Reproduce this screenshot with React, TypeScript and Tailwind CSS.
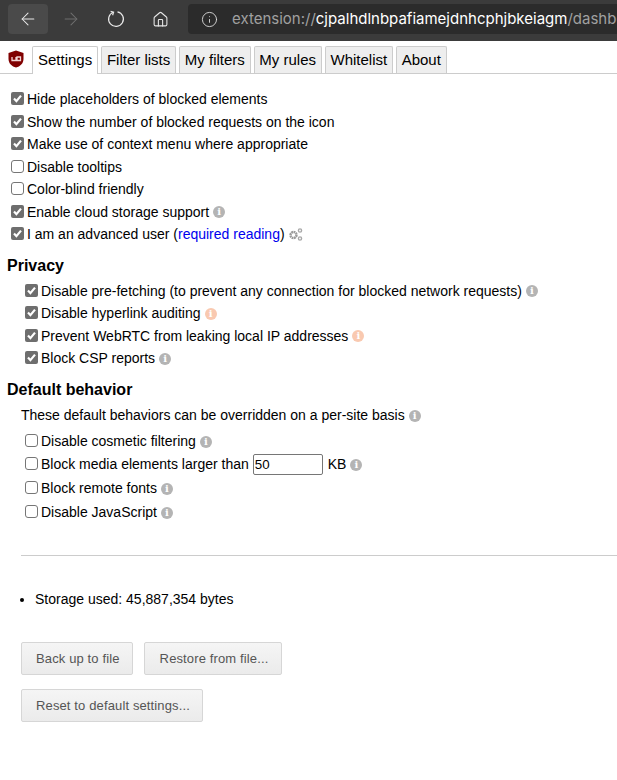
import { ArrowLeft, ArrowRight, Home, Info } from 'lucide-react';

const tabs = ['Filter lists', 'My filters', 'My rules', 'Whitelist', 'About'];

function Check({ checked = false }: { checked?: boolean }) {
  if (!checked) {
    return (
      <span className="h-[13px] w-[13px] shrink-0 -translate-y-px rounded-[3px] border border-[#767676] bg-white" />
    );
  }
  return (
    <span className="flex h-[13px] w-[13px] shrink-0 -translate-y-px items-center justify-center rounded-[2px] bg-[#6e6e6e]">
      <svg fill="none" height="11" viewBox="0 0 11 11" width="11">
        <path d="M2 5.6 4.4 8.2 9 2.6" stroke="white" strokeWidth="2.2" />
      </svg>
    </span>
  );
}

function InfoDot({ warn = false }: { warn?: boolean }) {
  return (
    <span
      className={`ml-px flex h-3 w-3 items-center justify-center rounded-full font-['DejaVu_Serif',serif] text-[10px] leading-none font-bold text-white ${
        warn ? 'bg-[#f9c9b0]' : 'bg-[#b4b4b4]'
      }`}
    >
      i
    </span>
  );
}

function Row({
  checked,
  children,
  className = 'h-[22.5px]',
}: {
  checked?: boolean;
  children: React.ReactNode;
  className?: string;
}) {
  return (
    <div className={`flex items-center gap-[3px] ${className}`}>
      <Check checked={checked} />
      {children}
    </div>
  );
}

function Btn({ children, className = 'pr-[12px] pl-[14px]' }: { children: React.ReactNode; className?: string }) {
  return (
    <button
      className={`h-[33px] rounded-[2px] border border-[#d6d6d6] bg-gradient-to-b from-[#f5f5f5] to-[#ebebeb] pt-px text-[13px] tracking-[0.13px] text-[#555] ${className}`}
      type="button"
    >
      {children}
    </button>
  );
}

export default function App() {
  return (
    <div className="h-[780px] w-[617px] overflow-hidden bg-white font-['Liberation_Sans',sans-serif] text-[14px] text-black">
      <div className="flex h-[41px] items-start bg-[#3b3b3b] pt-1">
        <div className="ml-2 flex h-[30px] w-10 items-center justify-center rounded-sm bg-[#4a4a4a]">
          <ArrowLeft className="text-[#e8e8e8]" size={20} strokeWidth={1.25} />
        </div>
        <div className="flex h-[30px] w-[46px] items-center justify-center">
          <ArrowRight className="text-[#6f6f6f]" size={20} strokeWidth={1.25} />
        </div>
        <div className="flex h-[30px] w-[44px] items-center justify-center">
          <svg fill="none" height="18" stroke="#e8e8e8" strokeWidth="1.2" viewBox="0 0 18 18" width="18">
            <path d="M6.2 2.2A7.4 7.4 0 1 0 10.5 1.8" />
            <path d="M3.6 1.4 6.6 2.2 5.6 5.2" />
          </svg>
        </div>
        <div className="flex h-[30px] w-[44px] items-center justify-center">
          <Home className="text-[#e8e8e8]" size={17} strokeWidth={1.5} />
        </div>
        <div className="ml-[6px] flex h-[30px] min-w-0 flex-1 items-center overflow-hidden rounded-l-[4px] bg-[#2b2b2b] pl-[13px] font-['Inter','Liberation_Sans',sans-serif] text-[15px] whitespace-nowrap">
          <Info className="mr-[14px] shrink-0 text-[#e0e0e0]" size={17} strokeWidth={1.25} />
          <span className="text-[#a0a0a0]">extension://</span>
          <span className="text-white">cjpalhdlnbpafiamejdnhcphjbkeiagm</span>
          <span className="text-[#a0a0a0]">/dashboard.html</span>
        </div>
      </div>

      <div className="flex h-[33px] items-end border-b border-[#cccccc] pl-2 text-[15px]">
        <svg className="mr-[8px] mb-[5px]" height="18" viewBox="0 0 16 18" width="16">
          <path d="M8 0.5 15.5 3v6c0 4.5-3.5 7.5-7.5 8.5C4 16.5.5 13.5.5 9V3z" fill="#800000" />
          <path d="M4 7v3.5h4V7M9 7h3.5v3.5H9z" fill="none" stroke="#f2d5d5" strokeWidth="1.3" />
        </svg>
        <div className="z-10 -mb-px flex h-[28px] items-center rounded-t-[2px] border border-b-0 border-[#cccccc] bg-white px-[5px]">
          Settings
        </div>
        {tabs.map((tab) => (
          <div
            className="ml-[3px] flex h-[27px] items-center rounded-t-[2px] border border-b-0 border-[#cccccc] bg-[#eeeeee] px-[4.75px]"
            key={tab}
          >
            {tab}
          </div>
        ))}
      </div>

      <div className="pt-[14.25px] pl-[11px]">
        <Row checked>Hide placeholders of blocked elements</Row>
        <Row checked>Show the number of blocked requests on the icon</Row>
        <Row checked>Make use of context menu where appropriate</Row>
        <Row>Disable tooltips</Row>
        <Row>Color-blind friendly</Row>
        <Row checked>
          Enable cloud storage support
          <InfoDot />
        </Row>
        <Row checked>
          <span>
            I am an advanced user (<span className="text-[#0000ee]">required reading</span>)
          </span>
          <svg height="15" viewBox="0 0 15 15" width="15">
            <circle cx="5.5" cy="8" fill="none" r="3" stroke="#999" strokeDasharray="1.8 0.5" strokeWidth="2.4" />
            <circle cx="12" cy="3.5" fill="none" r="1.6" stroke="#a8a8a8" strokeWidth="1.4" />
            <circle cx="12" cy="11.5" fill="none" r="1.6" stroke="#a8a8a8" strokeWidth="1.4" />
          </svg>
        </Row>
      </div>

      <h3 className="mt-[8.75px] pl-[7px] text-[16px] leading-[22px] font-bold">Privacy</h3>
      <div className="mt-[3.5px] pl-[25px]">
        <Row checked>
          Disable pre-fetching (to prevent any connection for blocked network requests)
          <InfoDot />
        </Row>
        <Row checked>
          Disable hyperlink auditing
          <InfoDot warn />
        </Row>
        <Row checked>
          Prevent WebRTC from leaking local IP addresses
          <InfoDot warn />
        </Row>
        <Row checked>
          Block CSP reports
          <InfoDot />
        </Row>
      </div>

      <h3 className="mt-[8.5px] pl-[7px] text-[16px] leading-[22px] font-bold">Default behavior</h3>
      <div className="mt-[4px] flex h-[22px] items-center gap-[3px] pl-[21px]">
        These default behaviors can be overridden on a per-site basis
        <InfoDot />
      </div>
      <div className="mt-[4px] pl-[25px]">
        <Row className="h-[22px]">
          Disable cosmetic filtering
          <InfoDot />
        </Row>
        <Row className="h-[24px]">
          Block media elements larger than
          <span className="ml-px flex h-[21px] w-[70px] items-center rounded-[2px] border border-[#767676] pl-px text-[13.3px]">
            50
          </span>
          <span className="ml-[2px]">KB</span>
          <InfoDot />
        </Row>
        <Row className="h-[24px]">
          Block remote fonts
          <InfoDot />
        </Row>
        <Row className="h-[24px]">
          Disable JavaScript
          <InfoDot />
        </Row>
      </div>

      <hr className="mt-[30px] ml-[21px] border-t border-[#cccccc]" />

      <ul className="mt-[35px] list-disc pl-[35px]">
        <li className="leading-[17px]">Storage used: 45,887,354 bytes</li>
      </ul>

      <div className="mt-[34px] pl-[21px]">
        <div className="flex gap-[11px]">
          <Btn>Back up to file</Btn>
          <Btn className="pr-[13px] pl-[15px]">Restore from file...</Btn>
        </div>
        <Btn className="mt-[14px] pr-[12px] pl-[14px]">Reset to default settings...</Btn>
      </div>
    </div>
  );
}
